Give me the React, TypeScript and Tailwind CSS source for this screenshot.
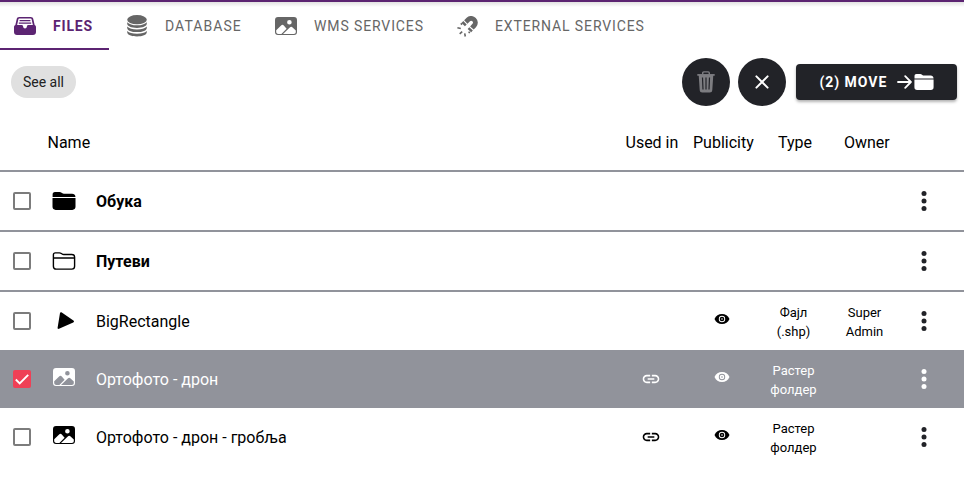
import React from "react";

type IconProps = { className?: string };

const InboxIcon = () => (
  <svg width="22" height="18" viewBox="0 0 22 18" fill="currentColor">
    <path d="M5.200 0h11.600c1.300 0 2.200.7 2.500 1.900L21 9.600h-1.800L17.600 2.300c-.1-.5-.4-.8-.9-.8H5.300c-.5 0-.8.3-.9.8L2.800 9.600H1L2.700 1.900C3 .7 3.900 0 5.200 0z" />
    <path d="M5.600 3h10.800v1.300H5.600zM4.800 5.500h12.400v1.300H4.800zM2 8h5.800c.6 0 1 .4 1.200 1 .3 1.800 1 2.500 2 2.500s1.700-.7 2-2.500c.2-.6.600-1 1.200-1H20c1.200 0 2 .8 2 2v5c0 1.800-1.200 3-3 3H3c-1.800 0-3-1.200-3-3v-5c0-1.200.8-2 2-2z" />
  </svg>
);

const DatabaseIcon = () => (
  <svg width="20" height="22" viewBox="0 0 20 22" fill="currentColor">
    <ellipse cx="10" cy="4.700" rx="9.800" ry="4.600" />
    <path d="M.2 7.200C2 9.200 5.500 10.300 10 10.300s8-1.100 9.800-3.100v1.600c0 2.400-4.300 4.100-9.800 4.100S.2 11.200.2 8.800z" />
    <path d="M.2 11.500c1.800 1.900 5.300 2.900 9.800 2.900s8-1 9.800-2.900v1.400c0 2.400-4.300 4.200-9.800 4.200S.2 15.300.2 12.900z" />
    <path d="M.2 15.900C2 17.700 5.500 18.700 10 18.700s8-1 9.800-2.800v1.400c0 2.400-4.300 4.200-9.800 4.200S.2 19.700.2 17.300z" />
  </svg>
);

const ImageIcon = () => (
  <svg width="22" height="18" viewBox="0 0 22 18" fill="currentColor">
    <path
      fillRule="evenodd"
      d="M3 0h16a3 3 0 0 1 3 3v12a3 3 0 0 1-3 3H3a3 3 0 0 1-3-3V3a3 3 0 0 1 3-3zM14.400 2.900a2.300 2.300 0 1 0 0 4.600a2.300 2.300 0 0 0 0-4.600zM1.200 13.300v1.500c0 1.300.8 2.100 2 2.100h3.200l5.200-5.100-2.800-3.200c-.8-.9-1.700-1-2.700-.2zM8 16.900h10.800c1.300 0 2-.8 2-2v-1.300l-3.200-3.200c-.9-.8-1.900-.8-2.800 0z"
    />
  </svg>
);

const MagnetIcon = () => (
  <svg width="21" height="21" viewBox="0 0 21 21" fill="none" stroke="currentColor">
    <path d="M8.800 5.900L11.300 3.500c3.900-3.600 9.600 2 5.900 6l-2.300 2.500" strokeWidth="4.800" />
    <path d="M8 6.800L6.200 8.600M14.100 12.900l-1.700 1.800" strokeWidth="4.800" />
    <path d="M3.700 7.400l1.500 1.100M.4 11.800l3.400.7M2.700 17.900l2.500-2.300M8.300 20.500l-.6-3.200M12.700 17.200l-1-1.600" strokeWidth="1.600" />
  </svg>
);

const FolderIcon = ({ className }: IconProps) => (
  <svg className={className} viewBox="0 0 24 19" preserveAspectRatio="none" fill="currentColor">
    <path d="M3 0h4.500c.9 0 1.500.3 2.100.8l.8.600c.4.3.8.4 1.400.4H20c2 0 3.200 1 3.400 3v.4H.6V2.800C.6 1 1.400 0 3 0zM.5 6.400h23v9.300c0 2.100-1.200 3.200-3.200 3.200H3.700c-2 0-3.200-1.100-3.200-3.200z" />
  </svg>
);

const FolderOutlineIcon = ({ className }: IconProps) => (
  <svg className={className} viewBox="0 0 24 19" preserveAspectRatio="none" fill="none" stroke="currentColor" strokeWidth="1.400">
    <path d="M3.400.9h4c.9 0 1.300.2 2 .7l.7.500c.5.4 1 .5 1.600.5h8.200c1.800 0 2.700.9 2.700 2.600v9.900c0 2-1 3-2.900 3H4.300c-1.900 0-2.900-1-2.900-3V3c0-1.400.6-2.100 2-2.100zM1.400 6.300h21.200" />
  </svg>
);

const ShapeIcon = () => (
  <svg className="ml-1" width="18" height="18" viewBox="0 0 18 18" fill="currentColor">
    <path d="M3 1C3.200.1 4 0 4.800.4L16.400 8.500c.9.7.8 1.500-.2 1.900L2 16.800c-.9.4-1.600-.1-1.400-1z" />
  </svg>
);

const TrashIcon = () => (
  <svg width="18" height="22" viewBox="0 0 18 22" fill="none" stroke="currentColor">
    <path d="M5.700 3.500V2c0-.8.4-1.100 1.100-1.100h4.400c.7 0 1.100.3 1.100 1.100v1.500" strokeWidth="1.400" />
    <path d="M.3 3.900h17.400" strokeWidth="1.700" />
    <path
      fill="currentColor"
      stroke="none"
      fillRule="evenodd"
      d="M1.700 4h14.600l-1 15c-.1 1.700-1 2.500-2.600 2.500H5.300c-1.600 0-2.500-.8-2.600-2.500zm3.200 2.600.5 12h1.200l-.5-12zm3.500 0v12h1.200v-12zm3.500 0-.5 12h1.200l.5-12z"
    />
  </svg>
);

const CloseIcon = () => (
  <svg width="14" height="14" viewBox="0 0 14 14" stroke="currentColor" strokeWidth="2" strokeLinecap="round">
    <path d="M1.400 1.400l11.200 11.200M12.600 1.400L1.400 12.600" />
  </svg>
);

const ArrowIcon = () => (
  <svg width="15" height="14" viewBox="0 0 15 14" fill="none" stroke="currentColor" strokeWidth="1.800" strokeLinecap="round" strokeLinejoin="round">
    <path d="M1 7h12.600M8.200 1.200L13.900 7l-5.700 5.800" />
  </svg>
);

const LinkIcon = () => (
  <svg width="20" height="20" viewBox="0 0 24 24" fill="currentColor">
    <path d="M3.900 12c0-1.710 1.390-3.100 3.100-3.100h4V7H7c-2.760 0-5 2.240-5 5s2.240 5 5 5h4v-1.900H7c-1.710 0-3.100-1.390-3.100-3.100zM8 13h8v-2H8v2zm9-6h-4v1.900h4c1.710 0 3.100 1.390 3.100 3.100s-1.390 3.100-3.100 3.100h-4V17h4c2.760 0 5-2.240 5-5s-2.240-5-5-5z" />
  </svg>
);

const EyeIcon = () => (
  <svg className="-mt-1 mr-px" width="16" height="10" viewBox="0 0 16 10" fill="currentColor">
    <path
      fillRule="evenodd"
      d="M8 0c3.400 0 6.100 1.700 7.500 5C14.100 8.300 11.400 10 8 10S1.900 8.300.5 5C1.900 1.700 4.600 0 8 0zm0 1.800a3.200 3.200 0 1 0 0 6.400a3.200 3.200 0 0 0 0-6.400zm0 .9a2.300 2.300 0 1 1 0 4.600a2.300 2.300 0 0 1 0-4.600zm0 1.500a.8.800 0 1 0 0 1.600a.8.800 0 0 0 0-1.600z"
    />
  </svg>
);

const MoreIcon = () => (
  <svg width="6" height="20" viewBox="0 0 6 20" fill="currentColor">
    <circle cx="3" cy="2.500" r="2.500" />
    <circle cx="3" cy="10" r="2.500" />
    <circle cx="3" cy="17.500" r="2.500" />
  </svg>
);

const Checkbox = ({ checked }: { checked?: boolean }) =>
  checked ? (
    <span className="flex h-[18px] w-[18px] items-center justify-center rounded-[2px] bg-[#ef4056]">
      <svg width="14" height="11" viewBox="0 0 14 11" fill="none" stroke="white" strokeWidth="1.900">
        <path d="M.8 5.500l3.900 3.900L13.200.9" />
      </svg>
    </span>
  ) : (
    <span className="h-[18px] w-[18px] rounded-[2px] border-2 border-[#7c7c7c]" />
  );

type Row = {
  name: string;
  icon: React.ReactNode;
  folder?: boolean;
  selected?: boolean;
  linked?: boolean;
  type?: [string, string];
  owner?: [string, string];
};

const rows: Row[] = [
  { name: "Обука", icon: <FolderIcon className="h-[18px] w-6" />, folder: true },
  { name: "Путеви", icon: <FolderOutlineIcon className="h-[18px] w-6" />, folder: true },
  { name: "BigRectangle", icon: <ShapeIcon />, type: ["Фајл", "(.shp)"], owner: ["Super", "Admin"] },
  { name: "Ортофото - дрон", icon: <ImageIcon />, selected: true, linked: true, type: ["Растер", "фолдер"] },
  { name: "Ортофото - дрон - гробља", icon: <ImageIcon />, linked: true, type: ["Растер", "фолдер"] },
];

const columns = "grid grid-cols-[44px_40px_531px_72px_71px_71px_71px_48px] items-center";

const TwoLines = ({ lines }: { lines?: [string, string] }) => (
  <div className="pt-0.5 text-center text-[13px] leading-[19px]">
    {lines?.map((line) => <div key={line}>{line}</div>)}
  </div>
);

function TableRow({ row }: { row: Row }) {
  const frame = row.folder ? "h-[60px] border-b-2 border-[#91939b]" : "h-[58px]";
  const tone = row.selected ? "bg-[#91939b] text-white" : "text-black";
  return (
    <div className={`${columns} ${frame} ${tone}`}>
      <div className="flex justify-center"><Checkbox checked={row.selected} /></div>
      <div className={row.folder || row.name === "BigRectangle" ? "flex justify-center" : "flex justify-center pb-1"}>{row.icon}</div>
      <div className={row.folder ? "pt-0.5 pl-3 font-bold" : "pt-0.5 pl-3"}>{row.name}</div>
      <div className="flex justify-center">{row.linked && <LinkIcon />}</div>
      <div className="flex justify-center">{row.type && <EyeIcon />}</div>
      <TwoLines lines={row.type} />
      <TwoLines lines={row.owner} />
      <div className={row.selected ? "flex justify-center" : "flex justify-center text-[#222328]"}><MoreIcon /></div>
    </div>
  );
}

export default function App() {
  return (
    <div className="h-[477px] w-[964px] overflow-hidden bg-white font-['Roboto','Noto_Sans',sans-serif] text-base text-black">
      <div className="h-0.5 bg-[#5c2472]" />
      <nav className="flex h-12 items-center bg-linear-to-b from-[#e2e2e2] to-white to-[5px] text-[14px] tracking-[0.88px] text-[#666]">
        <div className="flex h-12 w-[109px] items-center gap-[17px] border-b-2 border-[#5c2472] pt-0.5 pl-3.5 font-bold tracking-[0.8px] text-[#5c2472]">
          <InboxIcon />
          <span>FILES</span>
        </div>
        <div className="ml-[18px] flex w-[148px] items-center gap-[18px]">
          <DatabaseIcon />
          <span className="pt-px tracking-[1.05px]">DATABASE</span>
        </div>
        <div className="flex w-[182px] items-center gap-[17px]">
          <ImageIcon />
          <span className="pt-px whitespace-nowrap">WMS SERVICES</span>
        </div>
        <div className="flex items-center gap-[17px]">
          <MagnetIcon />
          <span className="pt-px whitespace-nowrap">EXTERNAL SERVICES</span>
        </div>
      </nav>

      <div className="flex h-16 items-center pr-[7px] pl-[11px]">
        <button className="h-8 w-[65px] rounded-full bg-[#e0e0e0] text-sm text-[#222]">See all</button>
        <div className="ml-auto flex items-center">
          <button className="flex h-12 w-12 items-center justify-center rounded-full bg-[#222328] text-[#7d7d81]"><TrashIcon /></button>
          <button className="ml-2 flex h-12 w-12 items-center justify-center rounded-full bg-[#222328] text-white"><CloseIcon /></button>
          <button className="ml-2.5 flex h-9 w-[161px] items-center rounded bg-[#222328] pl-[23.5px] text-white shadow-[0_2px_3px_rgba(0,0,0,0.3)]">
            <span className="w-[77px] text-left text-[14px] font-bold tracking-[0.95px] whitespace-nowrap">(2) MOVE</span>
            <ArrowIcon />
            <FolderIcon className="ml-0.5 h-4 w-5" />
          </button>
        </div>
      </div>

      <div className="flex h-[66px] -mt-2 items-center border-b-2 border-[#91939b] pt-2.5 pl-[47.5px] whitespace-nowrap">
        <span className="w-[578px]">Name</span>
        <span className="w-[67.5px]">Used in</span>
        <span className="w-[85px]">Publicity</span>
        <span className="w-[66px]">Type</span>
        <span>Owner</span>
      </div>
      {rows.map((row) => <TableRow key={row.name} row={row} />)}
    </div>
  );
}
